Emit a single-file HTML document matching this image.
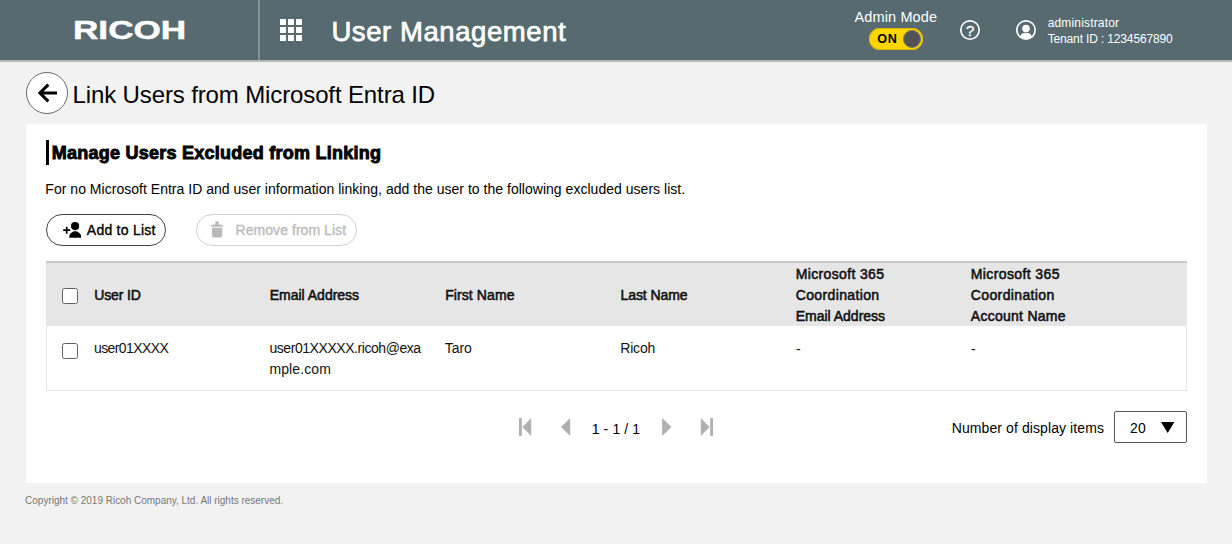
<!DOCTYPE html>
<html lang="en">
<head>
<meta charset="utf-8">
<title>User Management</title>
<style>
*{box-sizing:border-box;margin:0;padding:0}
html,body{width:1232px;height:544px;overflow:hidden}
body{background:#f2f2f2;font-family:"Liberation Sans",sans-serif;color:#000;position:relative}
.t{position:absolute;white-space:nowrap}
.a{position:absolute}
#hdr{left:0;top:0;width:1232px;height:62px;background:#566a6f;border-bottom:2px solid #b7b7b7}
#logo{left:72.7px;top:15.9px;font-size:26.3px;font-weight:bold;color:#fff;line-height:28px;transform-origin:0 0;transform:scaleX(1.336);-webkit-text-stroke:0.5px #fff}
#vsep{left:258px;top:0;width:2px;height:60px;background:#85908f}
#tog{left:869px;top:28px;width:54px;height:22px;border-radius:11px;background:#ffd600;box-shadow:inset 0 0 0 1px #d9b800}
#knob{left:903px;top:30px;width:18px;height:18px;border-radius:50%;background:#525256;border:1px solid #74746e}
#card{left:26px;top:124px;width:1181px;height:359px;background:#fff}
#back{left:26px;top:72px;width:42px;height:42px;border-radius:50%;border:1px solid #6b6b6b;background:#fff}
#bar{left:46px;top:140px;width:3px;height:25px;background:#000}
.btn{top:214px;height:32px;border-radius:16px;border:1px solid #444;background:#fff}
#b1{left:46px;width:120px}
#b2{left:196px;width:161px;border-color:#d0d0d0}
#thead{left:46px;top:261px;width:1141px;height:65px;background:#e6e6e6;border-top:2px solid #c9c9c9}
#tbody{left:46px;top:326px;width:1141px;height:65px;background:#fff;border:1px solid #e6e6e6;border-top:none}
.cb{left:62px;width:16px;height:16px;border:1px solid #626262;border-radius:2.5px;background:#fff}
#sel{left:1114px;top:411px;width:73px;height:32px;border:1px solid #555;border-radius:2px;background:#fff}
</style>
</head>
<body>
<div id="hdr" class="a"></div>
<div id="logo" class="t">RICOH</div>
<div id="vsep" class="a"></div>
<svg class="a" style="left:280px;top:19px" width="22" height="22" viewBox="0 0 22 22"><g fill="#fff"><rect x="0" y="0" width="6" height="6"/><rect x="8" y="0" width="6" height="6"/><rect x="16" y="0" width="6" height="6"/><rect x="0" y="8" width="6" height="6"/><rect x="8" y="8" width="6" height="6"/><rect x="16" y="8" width="6" height="6"/><rect x="0" y="16" width="6" height="6"/><rect x="8" y="16" width="6" height="6"/><rect x="16" y="16" width="6" height="6"/></g></svg>
<div id="tog" class="a"></div>
<div id="knob" class="a"></div>
<svg class="a" style="left:958px;top:18px" width="24" height="24" viewBox="0 0 24 24"><circle cx="12" cy="12" r="9.200" fill="none" stroke="#fff" stroke-width="1.650"/><text x="12" y="18.200" text-anchor="middle" font-family="Liberation Sans, sans-serif" font-size="15.500" fill="#fff" stroke="#fff" stroke-width="0.300">?</text></svg>
<svg class="a" style="left:1014px;top:18px" width="24" height="24" viewBox="0 0 24 24"><defs><clipPath id="uc"><circle cx="12" cy="12" r="9"/></clipPath></defs><circle cx="12" cy="12" r="9.200" fill="none" stroke="#fff" stroke-width="1.650"/><circle cx="12" cy="10.6" r="3.8" fill="#fff"/><path d="M4 22L6.100 18.300Q7.600 14.900 10.200 14.900H13.800Q16.400 14.900 17.900 18.300L20 22z" fill="#fff" clip-path="url(#uc)"/></svg>
<div id="back" class="a"></div>
<svg class="a" style="left:35.8px;top:81px" width="24" height="24" viewBox="0 0 24 24"><path d="M21 12H4.5M12.3 3.6L3.9 12l8.4 8.400" fill="none" stroke="#000" stroke-width="3"/></svg>
<div id="card" class="a"></div>
<div id="bar" class="a"></div>
<div id="b1" class="a btn"></div>
<div id="b2" class="a btn"></div>
<svg class="a" style="left:62px;top:221px" width="20" height="18" viewBox="0 0 20 18"><path d="M1.200 9.150h7M4.700 5.650v7" stroke="#000" stroke-width="1.700" fill="none"/><circle cx="13.100" cy="5.100" r="4.100" fill="#000"/><path d="M7.300 16.800v-1.400c0-3.200 3.700-5.200 5.900-5.200s5.900 2 5.900 5.200v1.400z" fill="#000"/></svg>
<svg class="a" style="left:211px;top:221px" width="13" height="17" viewBox="0 0 13 17"><g fill="#b9b9b9"><rect x="4.300" y="0.200" width="3.400" height="3.600" rx="1.200"/><path d="M0 5.700v-1.200q6-2.600 12 0v1.200z"/><path d="M1 6.700h10.200v7.900a1.900 1.900 0 0 1-1.900 1.900H2.900a1.900 1.900 0 0 1-1.900-1.900z"/></g></svg>
<div id="thead" class="a"></div>
<div id="tbody" class="a"></div>
<div class="a cb" style="top:288px"></div>
<div class="a cb" style="top:343px"></div>
<svg class="a" style="left:518px;top:417px" width="196" height="20" viewBox="0 0 196 20"><g fill="#b0b0b0"><rect x="1" y="1" width="2.800" height="18"/><path d="M4.400 10l8.800-9v18z"/><path d="M43 10l9.200-9v18z"/><path d="M153.400 10l-9.200-9v18z"/><path d="M191.600 10l-8.800-9v18z"/><rect x="192.200" y="1" width="2.800" height="18"/></g></svg>
<div id="sel" class="a"></div>
<svg class="a" style="left:1161px;top:422px" width="14" height="11" viewBox="0 0 14 11"><path d="M0 0h13.400L6.700 11z" fill="#000"/></svg>
<div id="title" class="t" style="left:331.43px;top:13.91px;font-size:27.5px;line-height:36px;letter-spacing:0.577px;color:#fff;-webkit-text-stroke:0.75px #fff">User Management</div>
<div id="adm" class="t" style="left:854.53px;top:7.91px;font-size:14.5px;line-height:19px;letter-spacing:0.126px;color:#fff">Admin Mode</div>
<div id="on" class="t" style="left:877.24px;top:30.84px;font-size:12.6px;line-height:16px;letter-spacing:0.621px;color:#000;font-weight:bold">ON</div>
<div id="un1" class="t" style="left:1047.68px;top:15.23px;font-size:12px;line-height:16px;letter-spacing:0.163px;color:#fff">administrator</div>
<div id="un2" class="t" style="left:1047.68px;top:30.93px;font-size:12px;line-height:16px;letter-spacing:-0.146px;color:#fff">Tenant ID : 1234567890</div>
<div id="ptitle" class="t" style="left:72.56px;top:79.27px;font-size:24px;line-height:31px;letter-spacing:-0.126px;color:#000">Link Users from Microsoft Entra ID</div>
<div id="h2" class="t" style="left:51.67px;top:141.75px;font-size:18px;line-height:23px;letter-spacing:0.251px;color:#000;font-weight:bold;-webkit-text-stroke:0.9px #000">Manage Users Excluded from Linking</div>
<div id="desc" class="t" style="left:45.36px;top:180.17px;font-size:14px;line-height:18px;letter-spacing:0.023px;color:#000">For no Microsoft Entra ID and user information linking, add the user to the following excluded users list.</div>
<div id="b1t" class="t" style="left:86.83px;top:221.37px;font-size:14px;line-height:18px;letter-spacing:0.247px;color:#000;-webkit-text-stroke:0.35px #000">Add to List</div>
<div id="b2t" class="t" style="left:235.54px;top:221.37px;font-size:14px;line-height:18px;letter-spacing:0.055px;color:#bbb;-webkit-text-stroke:0.35px #bbb">Remove from List</div>
<div id="th1" class="t" style="left:94.23px;top:285.97px;font-size:14px;line-height:18px;letter-spacing:-0.137px;color:#111;-webkit-text-stroke:0.55px #111">User ID</div>
<div id="th2" class="t" style="left:269.74px;top:285.97px;font-size:14px;line-height:18px;letter-spacing:-0.013px;color:#111;-webkit-text-stroke:0.55px #111">Email Address</div>
<div id="th3" class="t" style="left:445.13px;top:285.97px;font-size:14px;line-height:18px;letter-spacing:0.097px;color:#111;-webkit-text-stroke:0.55px #111">First Name</div>
<div id="th4" class="t" style="left:620.53px;top:285.97px;font-size:14px;line-height:18px;letter-spacing:-0.084px;color:#111;-webkit-text-stroke:0.55px #111">Last Name</div>
<div id="th5a" class="t" style="left:795.73px;top:264.77px;font-size:14px;line-height:18px;letter-spacing:0.357px;color:#111;-webkit-text-stroke:0.55px #111">Microsoft 365</div>
<div id="th5b" class="t" style="left:795.73px;top:285.87px;font-size:14px;line-height:18px;letter-spacing:0.367px;color:#111;-webkit-text-stroke:0.55px #111">Coordination</div>
<div id="th5c" class="t" style="left:795.73px;top:306.87px;font-size:14px;line-height:18px;letter-spacing:-0.013px;color:#111;-webkit-text-stroke:0.55px #111">Email Address</div>
<div id="th6a" class="t" style="left:970.83px;top:264.77px;font-size:14px;line-height:18px;letter-spacing:0.382px;color:#111;-webkit-text-stroke:0.55px #111">Microsoft 365</div>
<div id="th6b" class="t" style="left:970.83px;top:285.87px;font-size:14px;line-height:18px;letter-spacing:0.367px;color:#111;-webkit-text-stroke:0.55px #111">Coordination</div>
<div id="th6c" class="t" style="left:970.83px;top:306.87px;font-size:14px;line-height:18px;letter-spacing:0.264px;color:#111;-webkit-text-stroke:0.55px #111">Account Name</div>
<div id="td1" class="t" style="left:93.96px;top:338.77px;font-size:14px;line-height:18px;letter-spacing:-0.599px;color:#111">user01XXXX</div>
<div id="td2a" class="t" style="left:269.46px;top:338.77px;font-size:14px;line-height:18px;letter-spacing:-0.442px;color:#111">user01XXXXX.ricoh@exa</div>
<div id="td2b" class="t" style="left:269.46px;top:359.77px;font-size:14px;line-height:18px;letter-spacing:0.099px;color:#111">mple.com</div>
<div id="td3" class="t" style="left:444.86px;top:338.77px;font-size:14px;line-height:18px;letter-spacing:-0.085px;color:#111">Taro</div>
<div id="td4" class="t" style="left:620.26px;top:338.77px;font-size:14px;line-height:18px;letter-spacing:-0.179px;color:#111">Ricoh</div>
<div id="td5" class="t" style="left:795.96px;top:340.07px;font-size:14px;line-height:18px;letter-spacing:0.000px;color:#111">-</div>
<div id="td6" class="t" style="left:970.96px;top:340.07px;font-size:14px;line-height:18px;letter-spacing:0.000px;color:#111">-</div>
<div id="pg" class="t" style="left:591.66px;top:419.87px;font-size:14px;line-height:18px;letter-spacing:0.126px;color:#000">1 - 1 / 1</div>
<div id="nd" class="t" style="left:951.76px;top:419.17px;font-size:14px;line-height:18px;letter-spacing:0.091px;color:#000">Number of display items</div>
<div id="sv" class="t" style="left:1129.96px;top:419.17px;font-size:14px;line-height:18px;letter-spacing:0.302px;color:#000">20</div>
<div id="foot" class="t" style="left:25.10px;top:494.19px;font-size:10px;line-height:13px;letter-spacing:-0.008px;color:#777">Copyright © 2019 Ricoh Company, Ltd. All rights reserved.</div>
</body></html>
